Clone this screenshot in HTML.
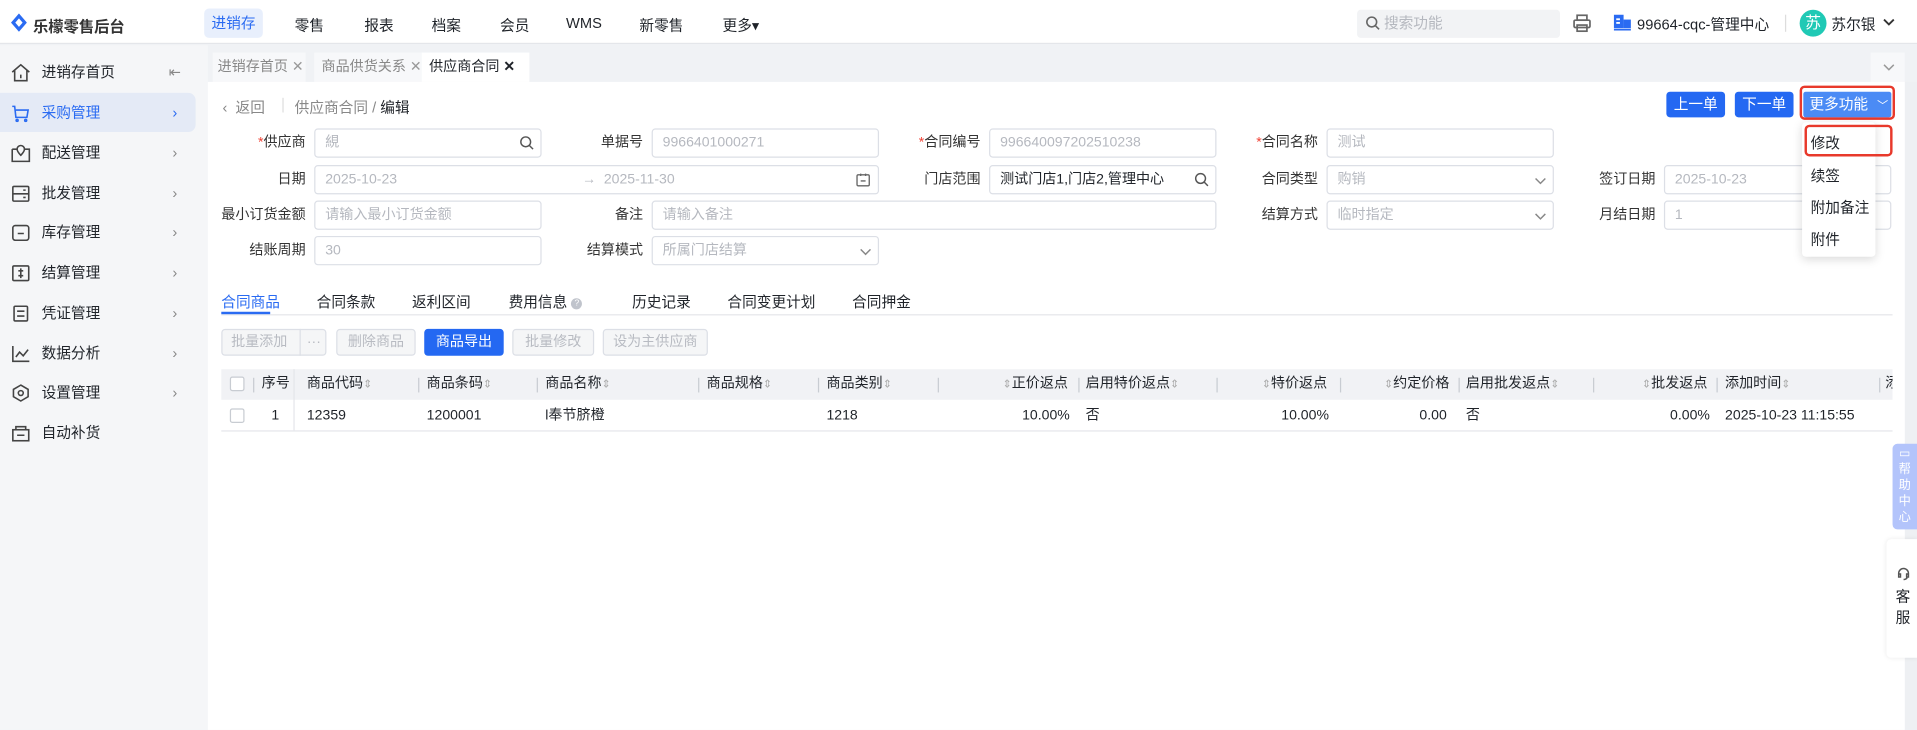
<!DOCTYPE html>
<html><head><meta charset="utf-8"><style>
*{box-sizing:border-box;margin:0;padding:0}
body{width:1917px;height:730px;overflow:hidden;background:#f0f2f5;font-family:"Liberation Sans","Noto Sans CJK SC",sans-serif;color:#1f2329}
#w{position:absolute;left:0;top:0;width:1568px;height:597px;transform:scale(1.22258);transform-origin:0 0;font-size:12px}
.a{position:absolute;white-space:nowrap}
.hdr{left:0;top:0;width:1568px;height:36px;background:#fff;border-bottom:1px solid #e4e6ea}
.side{left:0;top:37px;width:170px;height:560px;background:#f5f6f8}
.si{position:absolute;left:0;width:160px;height:30px;line-height:30px;font-size:12px}
.si .t{position:absolute;left:34px}
.si .c{position:absolute;left:141px;color:#888}
.si svg{position:absolute;left:9px;top:8px}
.main{left:170px;top:67px;width:1388px;height:530px;background:#fff}
.inp{position:absolute;height:24px;border:1px solid #dcdfe6;border-radius:3px;background:#fff;line-height:22px;padding-left:8px;color:#b5b8bf;font-size:11.5px}
.lb{position:absolute;text-align:right;width:100px;line-height:24px;font-size:11.5px;color:#333}
.lb i{color:#f04134;font-style:normal}
.btn{position:absolute;top:269px;height:22px;line-height:20px;border:1px solid #dcdfe6;border-radius:3px;background:#f5f6f7;color:#b8bbc2;text-align:center;font-size:11.5px}
.th{position:absolute;top:302px;line-height:25px;font-size:11.5px;color:#1f2329}
.td{position:absolute;top:327px;line-height:26px;font-size:11.5px}
.sep{position:absolute;top:309px;width:1px;height:12px;background:#c8ccd2}
.so{color:#aaa;font-size:9px}
</style></head><body><div id="w">
<div class="a hdr"></div>
<svg class="a" style="left:9px;top:11px" width="13" height="15" viewBox="0 0 13 15"><path d="M6.5 0L13 7.5 6.5 15 0 7.5Z" fill="#2a6bf2"/><path d="M6.5 4L9.5 7.5 6.5 11 3.5 7.5Z" fill="#fff"/></svg>
<div class="a" style="left:27px;top:11px;font-weight:bold;font-size:12.5px;color:#333">乐檬零售后台</div>
<div class="a" style="left:167px;top:7px;width:48px;height:24px;background:#e8effc;border-radius:4px;color:#2a6bf2;text-align:center;line-height:24px">进销存</div>
<div class="a" style="left:241px;top:12px">零售</div>
<div class="a" style="left:298px;top:12px">报表</div>
<div class="a" style="left:353px;top:12px">档案</div>
<div class="a" style="left:409px;top:12px">会员</div>
<div class="a" style="left:463px;top:12px">WMS</div>
<div class="a" style="left:523px;top:12px">新零售</div>
<div class="a" style="left:591px;top:12px">更多▾</div>
<div class="a" style="left:1110px;top:8px;width:166px;height:23px;background:#f2f3f5;border-radius:3px;color:#b5b8bf;line-height:23px;padding-left:22px">搜索功能</div>
<svg class="a" style="left:1117px;top:13px" width="12" height="12"><circle cx="5" cy="5" r="4" fill="none" stroke="#666" stroke-width="1.3"/><path d="M8 8l3 3" stroke="#666" stroke-width="1.3"/></svg>
<svg class="a" style="left:1286px;top:11px" width="16" height="16" viewBox="0 0 16 16" fill="none" stroke="#666" stroke-width="1.4"><rect x="4" y="1.5" width="8" height="4"/><rect x="1.5" y="5.5" width="13" height="6" rx="1"/><rect x="4" y="9.5" width="8" height="5"/></svg>
<svg class="a" style="left:1320px;top:12px" width="14" height="13"><rect x="0" y="0" width="8" height="11" fill="#2a6bf2"/><rect x="8" y="4" width="6" height="7" fill="#2a6bf2"/><rect x="0" y="11.5" width="14" height="1.5" fill="#2a6bf2"/><rect x="2" y="3" width="3" height="1.5" fill="#fff"/><rect x="2" y="6" width="3" height="1.5" fill="#fff"/></svg>
<div class="a" style="left:1339px;top:11px;font-size:12px">99664-cqc-管理中心</div>
<div class="a" style="left:1460px;top:12px;width:1px;height:14px;background:#ddd"></div>
<div class="a" style="left:1472px;top:8px;width:22px;height:22px;border-radius:11px;background:#20c9b5;color:#fff;text-align:center;line-height:22px;font-size:13px">苏</div>
<div class="a" style="left:1498px;top:11px">苏尔银</div>
<svg class="a" style="left:1540px;top:15px" width="10" height="7"><path d="M1 1l4 4 4-4" fill="none" stroke="#333" stroke-width="1.5"/></svg>

<div class="a side"></div>
<div class="a" style="left:0;top:76px;width:160px;height:32px;background:#e4eaf6;border-radius:0 6px 6px 0"></div>
<div class="si" style="top:44px"><svg width="16" height="15" fill="none" stroke="#444" stroke-width="1.3"><path d="M1 7L8 1l7 6M3 5.5V14h10V5.5M8 9v3"/></svg><span class="t">进销存首页</span><span class="c" style="left:138px">⇤</span></div>
<div class="si" style="top:77px;color:#2a6bf2"><svg width="16" height="15" fill="none" stroke="#2a6bf2" stroke-width="1.3"><path d="M1 2h2l1 9h9l1-6H4"/><circle cx="5" cy="13.5" r=".8"/><circle cx="12" cy="13.5" r=".8"/></svg><span class="t">采购管理</span><span class="c" style="color:#2a6bf2">›</span></div>
<div class="si" style="top:110px"><svg width="16" height="15" fill="none" stroke="#444" stroke-width="1.3"><path d="M1 4h4M11 4h4v10H1V4M8 1a3 3 0 013 3c0 2-3 5-3 5S5 6 5 4a3 3 0 013-3z"/></svg><span class="t">配送管理</span><span class="c">›</span></div>
<div class="si" style="top:143px"><svg width="16" height="15" fill="none" stroke="#444" stroke-width="1.3"><rect x="1.5" y="1.5" width="13" height="12" rx="1"/><path d="M1.5 7.5h13M10 4.5h2M10 10.5h2"/></svg><span class="t">批发管理</span><span class="c">›</span></div>
<div class="si" style="top:175px"><svg width="16" height="15" fill="none" stroke="#444" stroke-width="1.3"><rect x="1.5" y="1.5" width="13" height="12" rx="2"/><path d="M5.5 8h5"/></svg><span class="t">库存管理</span><span class="c">›</span></div>
<div class="si" style="top:208px"><svg width="16" height="15" fill="none" stroke="#444" stroke-width="1.3"><rect x="1.5" y="1.5" width="13" height="12" rx="1"/><path d="M8 3.5v8M6 5.5h4M6 9.5h4"/></svg><span class="t">结算管理</span><span class="c">›</span></div>
<div class="si" style="top:241px"><svg width="16" height="15" fill="none" stroke="#444" stroke-width="1.3"><rect x="2.5" y="1.5" width="11" height="12" rx="1"/><path d="M5 5.5h6M5 9.5h6"/></svg><span class="t">凭证管理</span><span class="c">›</span></div>
<div class="si" style="top:274px"><svg width="16" height="15" fill="none" stroke="#444" stroke-width="1.3"><path d="M1.5 1v12.5H15M4 10l3-4 3 3 4-5"/></svg><span class="t">数据分析</span><span class="c">›</span></div>
<div class="si" style="top:306px"><svg width="16" height="15" fill="none" stroke="#444" stroke-width="1.3"><path d="M8 1l6 3.5v6L8 14l-6-3.5v-6z"/><circle cx="8" cy="7.5" r="2"/></svg><span class="t">设置管理</span><span class="c">›</span></div>
<div class="si" style="top:339px"><svg width="16" height="15" fill="none" stroke="#444" stroke-width="1.3"><rect x="1.5" y="4.5" width="13" height="9"/><path d="M4 4.5V2h8v2.5M5 9h6"/></svg><span class="t">自动补货</span></div>

<div class="a" style="left:174px;top:43px;width:76px;height:24px;background:#f7f8fa;color:#888;line-height:24px;padding-left:4px;font-size:11.5px">进销存首页 <span style="color:#999">✕</span></div>
<div class="a" style="left:257px;top:43px;width:89px;height:24px;background:#f7f8fa;color:#888;line-height:24px;padding-left:6px;font-size:11.5px">商品供货关系 <span style="color:#999">✕</span></div>
<div class="a" style="left:345px;top:43px;width:88px;height:24px;background:#fff;line-height:24px;padding-left:6px;font-size:11.5px">供应商合同 <b>✕</b></div>
<div class="a" style="left:1530px;top:43px;width:28px;height:24px;background:#f7f8fa"></div>
<svg class="a" style="left:1540px;top:52px" width="10" height="6"><path d="M1 1l4 4 4-4" fill="none" stroke="#999" stroke-width="1.2"/></svg>
<div class="a" style="left:1558px;top:67px;width:10px;height:530px;background:#eef0f3"></div>
<div class="a main"></div>

<div class="a" style="left:182px;top:79px;color:#888">‹&nbsp; 返回</div>
<div class="a" style="left:231px;top:80px;width:1px;height:12px;background:#ddd"></div>
<div class="a" style="left:241px;top:79px;color:#888">供应商合同 / <span style="color:#1f2329">编辑</span></div>
<div class="a" style="left:1363px;top:75px;width:48px;height:21px;background:#2468f2;color:#fff;border-radius:3px;text-align:center;line-height:21px">上一单</div>
<div class="a" style="left:1419px;top:75px;width:48px;height:21px;background:#2468f2;color:#fff;border-radius:3px;text-align:center;line-height:21px">下一单</div>
<div class="a" style="left:1475px;top:75px;width:72px;height:21px;background:#4b8bf5;color:#fff;border-radius:2px;line-height:21px;padding-left:5px">更多功能 <span style="font-size:9px;margin-left:4px">﹀</span></div>
<div class="a" style="left:1472px;top:70px;width:78px;height:28px;border:2px solid #e8392b;border-radius:4px"></div>

<div class="lb" style="left:150px;top:105px"><i>*</i>供应商</div>
<div class="inp" style="left:257px;top:105px;width:186px">絸</div>
<svg class="a" style="left:425px;top:111px" width="12" height="12"><circle cx="5" cy="5" r="4" fill="none" stroke="#555" stroke-width="1.2"/><path d="M8 8l3 3" stroke="#555" stroke-width="1.2"/></svg>
<div class="lb" style="left:426px;top:105px">单据号</div>
<div class="inp" style="left:533px;top:105px;width:186px">9966401000271</div>
<div class="lb" style="left:702px;top:105px"><i>*</i>合同编号</div>
<div class="inp" style="left:809px;top:105px;width:186px">996640097202510238</div>
<div class="lb" style="left:978px;top:105px"><i>*</i>合同名称</div>
<div class="inp" style="left:1085px;top:105px;width:186px">测试</div>

<div class="lb" style="left:150px;top:135px">日期</div>
<div class="inp" style="left:257px;top:135px;width:462px">2025-10-23<span style="position:absolute;left:218px">→&nbsp; 2025-11-30</span></div>
<svg class="a" style="left:700px;top:141px" width="12" height="12" fill="none" stroke="#666" stroke-width="1.1"><rect x="1" y="2" width="10" height="9" rx="1"/><path d="M4 1v2M8 1v2M4 7h4"/></svg>
<div class="lb" style="left:702px;top:135px">门店范围</div>
<div class="inp" style="left:809px;top:135px;width:186px;color:#1f2329">测试门店1,门店2,管理中心</div>
<svg class="a" style="left:977px;top:141px" width="12" height="12"><circle cx="5" cy="5" r="4" fill="none" stroke="#555" stroke-width="1.2"/><path d="M8 8l3 3" stroke="#555" stroke-width="1.2"/></svg>
<div class="lb" style="left:978px;top:135px">合同类型</div>
<div class="inp" style="left:1085px;top:135px;width:186px">购销</div>
<svg class="a" style="left:1255px;top:145px" width="10" height="6"><path d="M1 1l4 4 4-4" fill="none" stroke="#888" stroke-width="1.2"/></svg>
<div class="lb" style="left:1254px;top:135px">签订日期</div>
<div class="inp" style="left:1361px;top:135px;width:186px">2025-10-23</div>

<div class="lb" style="left:150px;top:164px">最小订货金额</div>
<div class="inp" style="left:257px;top:164px;width:186px">请输入最小订货金额</div>
<div class="lb" style="left:426px;top:164px">备注</div>
<div class="inp" style="left:533px;top:164px;width:462px">请输入备注</div>
<div class="lb" style="left:978px;top:164px">结算方式</div>
<div class="inp" style="left:1085px;top:164px;width:186px">临时指定</div>
<svg class="a" style="left:1255px;top:174px" width="10" height="6"><path d="M1 1l4 4 4-4" fill="none" stroke="#888" stroke-width="1.2"/></svg>
<div class="lb" style="left:1254px;top:164px">月结日期</div>
<div class="inp" style="left:1361px;top:164px;width:186px">1</div>

<div class="lb" style="left:150px;top:193px">结账周期</div>
<div class="inp" style="left:257px;top:193px;width:186px">30</div>
<div class="lb" style="left:426px;top:193px">结算模式</div>
<div class="inp" style="left:533px;top:193px;width:186px">所属门店结算</div>
<svg class="a" style="left:703px;top:203px" width="10" height="6"><path d="M1 1l4 4 4-4" fill="none" stroke="#888" stroke-width="1.2"/></svg>

<div class="a" style="left:1474px;top:100px;width:60px;height:110px;background:#fff;box-shadow:0 2px 8px rgba(0,0,0,.15);border-radius:3px"></div>
<div class="a" style="left:1481px;top:108px">修改</div>
<div class="a" style="left:1476px;top:102px;width:72px;height:26px;border:2px solid #e8392b;border-radius:4px"></div>
<div class="a" style="left:1481px;top:135px">续签</div>
<div class="a" style="left:1481px;top:161px">附加备注</div>
<div class="a" style="left:1481px;top:187px">附件</div>

<div class="a" style="left:181px;top:257px;width:1367px;height:1px;background:#e4e6ea"></div>
<div class="a" style="left:181px;top:238px;color:#2a6bf2">合同商品</div>
<div class="a" style="left:181px;top:255px;width:40px;height:2px;background:#2a6bf2"></div>
<div class="a" style="left:259px;top:238px">合同条款</div>
<div class="a" style="left:337px;top:238px">返利区间</div>
<div class="a" style="left:416px;top:238px">费用信息 <span style="display:inline-block;width:9px;height:9px;border-radius:5px;background:#c0c4cc;color:#fff;font-size:7px;line-height:9px;text-align:center;vertical-align:1px">?</span></div>
<div class="a" style="left:517px;top:238px">历史记录</div>
<div class="a" style="left:595px;top:238px">合同变更计划</div>
<div class="a" style="left:697px;top:238px">合同押金</div>

<div class="btn" style="left:181px;width:86px;text-align:left;padding-left:7px">批量添加<span style="position:absolute;left:63px;top:-1px;width:1px;height:22px;background:#dcdfe6"></span><span style="position:absolute;left:69px">···</span></div>
<div class="btn" style="left:275px;width:65px">删除商品</div>
<div class="btn" style="left:347px;width:65px;background:#2468f2;border-color:#2468f2;color:#fff">商品导出</div>
<div class="btn" style="left:419px;width:67px">批量修改</div>
<div class="btn" style="left:493px;width:86px">设为主供应商</div>

<div class="a" style="left:181px;top:302px;width:1367px;height:25px;background:#f1f2f5"></div>
<div class="a" style="left:181px;top:352px;width:1367px;height:1px;background:#e4e6ea"></div>
<div class="a" style="left:240px;top:302px;width:1px;height:50px;background:#e4e6ea"></div>
<div class="a" style="left:188px;top:308px;width:12px;height:12px;border:1px solid #c8ccd2;border-radius:2px;background:#fff"></div>
<div class="a" style="left:188px;top:334px;width:12px;height:12px;border:1px solid #c8ccd2;border-radius:2px;background:#fff"></div>
<div class="sep" style="left:207px"></div>
<div class="th" style="left:214px">序号</div>
<div class="th" style="left:251px">商品代码<span class="so">⇕</span></div>
<div class="sep" style="left:342px"></div>
<div class="th" style="left:349px">商品条码<span class="so">⇕</span></div>
<div class="sep" style="left:439px"></div>
<div class="th" style="left:446px">商品名称<span class="so">⇕</span></div>
<div class="sep" style="left:571px"></div>
<div class="th" style="left:578px">商品规格<span class="so">⇕</span></div>
<div class="sep" style="left:669px"></div>
<div class="th" style="left:676px">商品类别<span class="so">⇕</span></div>
<div class="sep" style="left:767px"></div>
<div class="th" style="left:820px"><span class="so">⇕</span>正价返点</div>
<div class="sep" style="left:882px"></div>
<div class="th" style="left:888px">启用特价返点<span class="so">⇕</span></div>
<div class="sep" style="left:995px"></div>
<div class="th" style="left:1032px"><span class="so">⇕</span>特价返点</div>
<div class="sep" style="left:1096px"></div>
<div class="th" style="left:1132px"><span class="so">⇕</span>约定价格</div>
<div class="sep" style="left:1193px"></div>
<div class="th" style="left:1199px">启用批发返点<span class="so">⇕</span></div>
<div class="sep" style="left:1303px"></div>
<div class="th" style="left:1343px"><span class="so">⇕</span>批发返点</div>
<div class="sep" style="left:1404px"></div>
<div class="th" style="left:1411px">添加时间<span class="so">⇕</span></div>
<div class="sep" style="left:1537px"></div>
<div class="th" style="left:1542px;width:6px;overflow:hidden">添</div>

<div class="td" style="left:222px">1</div>
<div class="td" style="left:251px">12359</div>
<div class="td" style="left:349px">1200001</div>
<div class="td" style="left:446px">l奉节脐橙</div>
<div class="td" style="left:676px">1218</div>
<div class="td" style="left:836px">10.00%</div>
<div class="td" style="left:888px">否</div>
<div class="td" style="left:1048px">10.00%</div>
<div class="td" style="left:1161px">0.00</div>
<div class="td" style="left:1199px">否</div>
<div class="td" style="left:1366px">0.00%</div>
<div class="td" style="left:1411px">2025-10-23 11:15:55</div>

<div class="a" style="left:1548px;top:363px;width:20px;height:70px;background:#b3c4fb;border-radius:4px 0 0 4px;color:#fff;font-size:10px;line-height:13px;text-align:center;padding-top:2px;overflow:hidden">▭<br>帮<br>助<br>中<br>心</div>
<div class="a" style="left:1543px;top:441px;width:25px;height:97px;background:#fff;border-radius:4px 0 0 4px;box-shadow:0 0 4px rgba(0,0,0,.08);font-size:12px;line-height:17px;text-align:center;padding-top:22px;padding-left:2px"><svg width="12" height="12" fill="none" stroke="#555" stroke-width="1.2"><path d="M2 7V6a4 4 0 018 0v1M2 7v2h1.5V6.5H2M10 7v2H8.5V6.5H10M9 9.5c-1 1.5-2 1.5-3 1.5"/></svg><br>客<br>服</div>
</div></body></html>
